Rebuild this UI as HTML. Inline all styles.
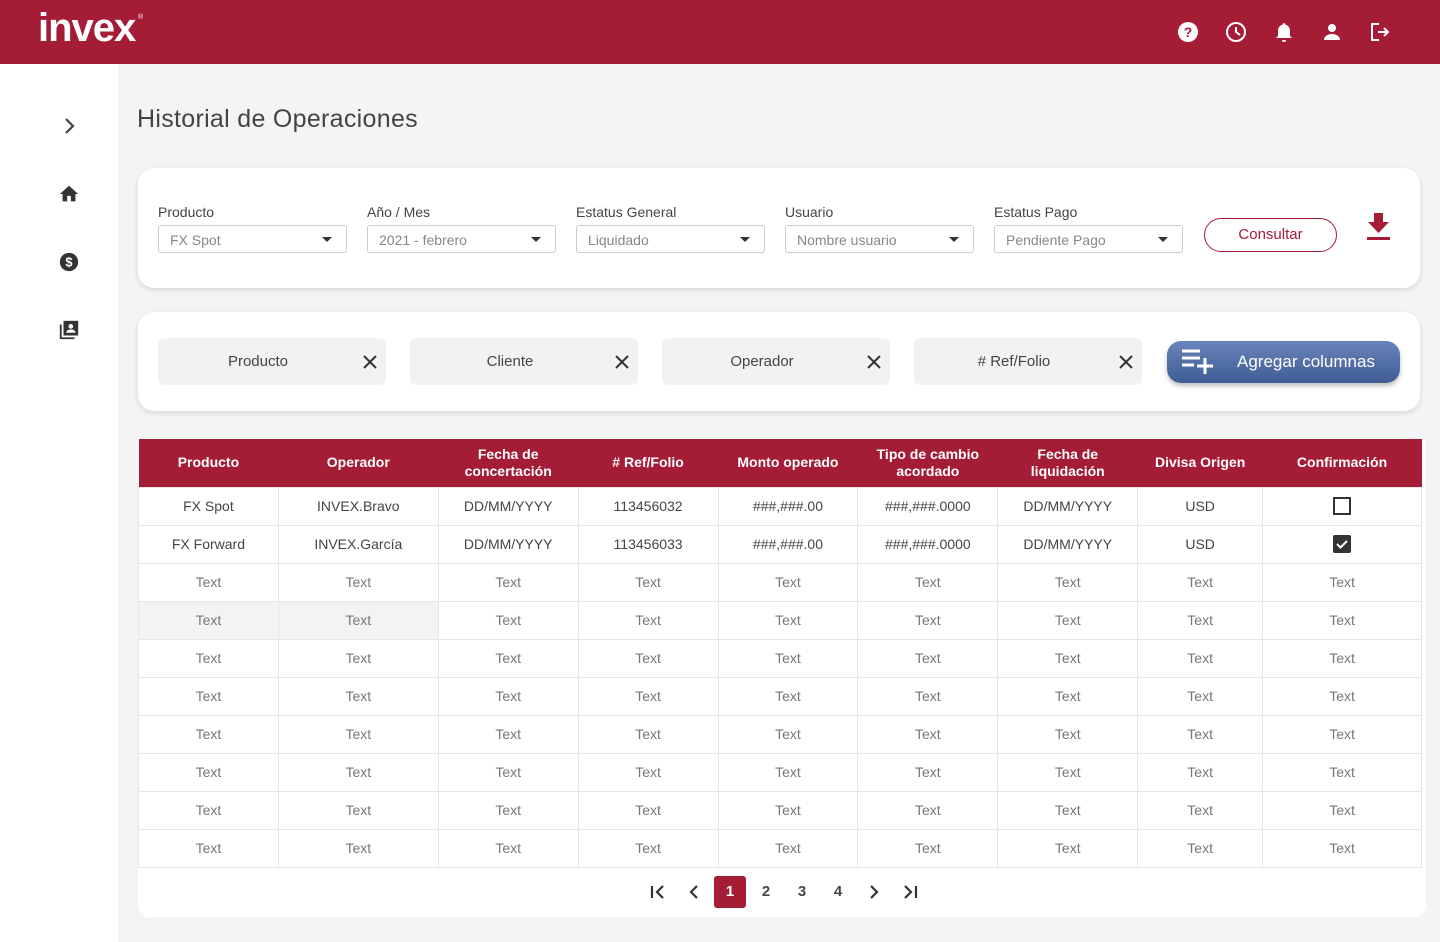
<!DOCTYPE html>
<html><head><meta charset="utf-8"><style>
*{box-sizing:border-box;margin:0;padding:0}
body{width:1440px;height:942px;background:#f4f4f4;font-family:"Liberation Sans",sans-serif;color:#444;position:relative;overflow:hidden}
.abs{position:absolute}
.top{left:0;top:0;width:1440px;height:64px;background:#a51c36}
.side{left:0;top:64px;width:118px;height:878px;background:#fff}
.card{background:#fff;border-radius:16px;box-shadow:0 2px 6px rgba(0,0,0,.12)}
.lbl{font-size:14px;color:#444}
.sel{width:189px;height:28px;border:1px solid #ccc;border-radius:3px;font-size:14px;color:#888;padding:6px 11px;background:#fff}
.sel:after{content:"";position:absolute;right:14px;top:11px;border:5px solid transparent;border-top:5px solid #333;border-bottom:0}
.chip{width:228px;height:47px;background:#f2f2f2;border-radius:6px;font-size:15px;color:#444;text-align:center;line-height:47px;padding-right:28px}
.chip svg{position:absolute;right:8px;top:16px}
table{border-collapse:collapse;position:absolute;left:138px;top:439px;width:1284px;font-size:14px}
th{background:#a51c36;color:#fff;font-weight:bold;height:48px;font-size:14px;line-height:17px}
td{height:38px;text-align:center;border:1px solid #e6e6e6;background:#fff;color:#444}
tr.t td{color:#777}
tr.g td:nth-child(-n+2){background:#f3f3f3}
.pg{top:876px;font-size:15px;font-weight:bold;color:#444;width:32px;height:32px;line-height:32px;text-align:center}
</style></head><body>
<div class="abs top"></div>
<div class="abs" style="left:38px;top:6px;color:#fff;font-size:40px;font-weight:bold;letter-spacing:-1px">invex</div>
<div class="abs" style="left:138px;top:14px;color:#fff;font-size:7px">®</div>
<svg class="abs" style="left:1176px;top:20px" width="24" height="24" viewBox="0 0 24 24"><circle cx="12" cy="12" r="10" fill="#fff"/><text x="12" y="17" font-size="14" font-weight="bold" text-anchor="middle" fill="#a51c36" font-family="Liberation Sans">?</text></svg>
<svg class="abs" style="left:1224px;top:20px" width="24" height="24" viewBox="0 0 24 24"><circle cx="12" cy="12" r="9" fill="none" stroke="#fff" stroke-width="2"/><path d="M12 7v5l4 3" stroke="#fff" stroke-width="2" fill="none"/></svg>
<svg class="abs" style="left:1272px;top:20px" width="24" height="24" viewBox="0 0 24 24"><path d="M12 3a2 2 0 0 1 1.5 1.6A6 6 0 0 1 18 10v6l2 2H4l2-2v-6a6 6 0 0 1 4.5-5.4A2 2 0 0 1 12 3zM10 20h4a2 2 0 0 1-4 0z" fill="#fff"/></svg>
<svg class="abs" style="left:1320px;top:20px" width="24" height="24" viewBox="0 0 24 24"><circle cx="12" cy="8" r="4" fill="#fff"/><path d="M4 20c0-4 4-6 8-6s8 2 8 6z" fill="#fff"/></svg>
<svg class="abs" style="left:1368px;top:20px" width="24" height="24" viewBox="0 0 24 24"><path d="M11 4H4v16h7" fill="none" stroke="#fff" stroke-width="2"/><path d="M10 12h10M16 8l4 4-4 4" fill="none" stroke="#fff" stroke-width="2"/></svg>
<div class="abs side"></div>
<svg class="abs" style="left:57px;top:114px" width="24" height="24" viewBox="0 0 24 24"><path d="M9 5l7 7-7 7" fill="none" stroke="#444" stroke-width="2.2"/></svg>
<svg class="abs" style="left:58px;top:183px" width="22" height="22" viewBox="0 0 24 24"><path d="M12 3L2 12h3v8h5v-6h4v6h5v-8h3z" fill="#333"/></svg>
<svg class="abs" style="left:58px;top:251px" width="22" height="22" viewBox="0 0 24 24"><circle cx="12" cy="12" r="10" fill="#333"/><text x="12" y="17" font-size="14" font-weight="bold" text-anchor="middle" fill="#fff" font-family="Liberation Sans">$</text></svg>
<svg class="abs" style="left:58px;top:319px" width="22" height="22" viewBox="0 0 24 24"><path d="M2 6v16h16v-2H4V6z" fill="#333"/><rect x="6" y="2" width="16" height="16" fill="#333"/><circle cx="14" cy="8" r="2.5" fill="#fff"/><path d="M9 15c0-2.5 2.5-3.5 5-3.5s5 1 5 3.5z" fill="#fff"/></svg>
<div class="abs" style="left:137px;top:105px;font-size:25px;color:#444;letter-spacing:0.3px">Historial de Operaciones</div>

<div class="abs card" style="left:138px;top:168px;width:1282px;height:120px"></div>
<div class="abs lbl" style="left:158px;top:204px">Producto</div><div class="abs sel" style="left:158px;top:225px">FX Spot</div>
<div class="abs lbl" style="left:367px;top:204px">Año / Mes</div><div class="abs sel" style="left:367px;top:225px">2021 - febrero</div>
<div class="abs lbl" style="left:576px;top:204px">Estatus General</div><div class="abs sel" style="left:576px;top:225px">Liquidado</div>
<div class="abs lbl" style="left:785px;top:204px">Usuario</div><div class="abs sel" style="left:785px;top:225px">Nombre usuario</div>
<div class="abs lbl" style="left:994px;top:204px">Estatus Pago</div><div class="abs sel" style="left:994px;top:225px">Pendiente Pago</div>
<div class="abs" style="left:1204px;top:218px;width:133px;height:34px;border:1px solid #a51c36;border-radius:17px;color:#a51c36;font-size:15px;text-align:center;line-height:32px">Consultar</div>
<svg class="abs" style="left:1366px;top:213px" width="25" height="30" viewBox="0 0 25 30"><path d="M8 0h9v9h6L12.5 20 2 9h6z" fill="#a51c36"/><rect x="1" y="24" width="23" height="3" fill="#a51c36"/></svg>

<div class="abs card" style="left:138px;top:312px;width:1282px;height:99px"></div>
<div class="abs chip" style="left:158px;top:338px">Producto<svg width="16" height="16" viewBox="0 0 16 16"><path d="M2 2l12 12M14 2L2 14" stroke="#333" stroke-width="2"/></svg></div>
<div class="abs chip" style="left:410px;top:338px">Cliente<svg width="16" height="16" viewBox="0 0 16 16"><path d="M2 2l12 12M14 2L2 14" stroke="#333" stroke-width="2"/></svg></div>
<div class="abs chip" style="left:662px;top:338px">Operador<svg width="16" height="16" viewBox="0 0 16 16"><path d="M2 2l12 12M14 2L2 14" stroke="#333" stroke-width="2"/></svg></div>
<div class="abs chip" style="left:914px;top:338px"># Ref/Folio<svg width="16" height="16" viewBox="0 0 16 16"><path d="M2 2l12 12M14 2L2 14" stroke="#333" stroke-width="2"/></svg></div>
<div class="abs" style="left:1167px;top:341px;width:233px;height:42px;border-radius:14px;background:linear-gradient(#6884bb,#3f5c94);box-shadow:0 3px 5px rgba(0,0,0,.25);color:#fff;font-size:17px;line-height:42px;padding-left:70px">Agregar columnas</div>
<svg class="abs" style="left:1181px;top:349px" width="34" height="26" viewBox="0 0 34 26"><path d="M1 2h18M1 9h18M1 16h12M24 9v16M16 17h16" stroke="#fff" stroke-width="3"/></svg>

<div class="abs" style="left:138px;top:439px;width:1288px;height:478px;background:#fff;border-radius:0 0 12px 12px"></div>
<table>
<colgroup><col style="width:140px"><col style="width:160px"><col style="width:140px"><col style="width:140px"><col style="width:140px"><col style="width:140px"><col style="width:140px"><col style="width:125px"><col style="width:159px"></colgroup>
<tr><th>Producto</th><th>Operador</th><th>Fecha de<br>concertación</th><th># Ref/Folio</th><th>Monto operado</th><th>Tipo de cambio<br>acordado</th><th>Fecha de<br>liquidación</th><th>Divisa Origen</th><th>Confirmación</th></tr>
<tr><td>FX Spot</td><td>INVEX.Bravo</td><td>DD/MM/YYYY</td><td>113456032</td><td>###,###.00</td><td>###,###.0000</td><td>DD/MM/YYYY</td><td>USD</td><td><svg width="18" height="18" style="vertical-align:middle"><rect x="1" y="1" width="16" height="16" fill="none" stroke="#333" stroke-width="2"/></svg></td></tr>
<tr><td>FX Forward</td><td>INVEX.García</td><td>DD/MM/YYYY</td><td>113456033</td><td>###,###.00</td><td>###,###.0000</td><td>DD/MM/YYYY</td><td>USD</td><td><svg width="18" height="18" style="vertical-align:middle"><rect width="18" height="18" rx="2" fill="#333"/><path d="M4 9l3.5 3.5L14 6" stroke="#fff" stroke-width="2" fill="none"/></svg></td></tr>
<tr class="t"><td>Text</td><td>Text</td><td>Text</td><td>Text</td><td>Text</td><td>Text</td><td>Text</td><td>Text</td><td>Text</td></tr>
<tr class="t g"><td>Text</td><td>Text</td><td>Text</td><td>Text</td><td>Text</td><td>Text</td><td>Text</td><td>Text</td><td>Text</td></tr>
<tr class="t"><td>Text</td><td>Text</td><td>Text</td><td>Text</td><td>Text</td><td>Text</td><td>Text</td><td>Text</td><td>Text</td></tr>
<tr class="t"><td>Text</td><td>Text</td><td>Text</td><td>Text</td><td>Text</td><td>Text</td><td>Text</td><td>Text</td><td>Text</td></tr>
<tr class="t"><td>Text</td><td>Text</td><td>Text</td><td>Text</td><td>Text</td><td>Text</td><td>Text</td><td>Text</td><td>Text</td></tr>
<tr class="t"><td>Text</td><td>Text</td><td>Text</td><td>Text</td><td>Text</td><td>Text</td><td>Text</td><td>Text</td><td>Text</td></tr>
<tr class="t"><td>Text</td><td>Text</td><td>Text</td><td>Text</td><td>Text</td><td>Text</td><td>Text</td><td>Text</td><td>Text</td></tr>
<tr class="t"><td>Text</td><td>Text</td><td>Text</td><td>Text</td><td>Text</td><td>Text</td><td>Text</td><td>Text</td><td>Text</td></tr>
</table>
<svg class="abs" style="left:648px;top:883px" width="20" height="18" viewBox="0 0 20 18"><path d="M4 3v12M15 3l-6 6 6 6" stroke="#333" stroke-width="2.2" fill="none"/></svg>
<svg class="abs" style="left:684px;top:883px" width="20" height="18" viewBox="0 0 20 18"><path d="M13 3l-6 6 6 6" stroke="#333" stroke-width="2.2" fill="none"/></svg>
<div class="abs pg" style="left:714px;background:#a51c36;color:#fff;border-radius:3px">1</div>
<div class="abs pg" style="left:750px">2</div>
<div class="abs pg" style="left:786px">3</div>
<div class="abs pg" style="left:822px">4</div>
<svg class="abs" style="left:864px;top:883px" width="20" height="18" viewBox="0 0 20 18"><path d="M7 3l6 6-6 6" stroke="#333" stroke-width="2.2" fill="none"/></svg>
<svg class="abs" style="left:900px;top:883px" width="20" height="18" viewBox="0 0 20 18"><path d="M5 3l6 6-6 6M16 3v12" stroke="#333" stroke-width="2.2" fill="none"/></svg>
</body></html>
